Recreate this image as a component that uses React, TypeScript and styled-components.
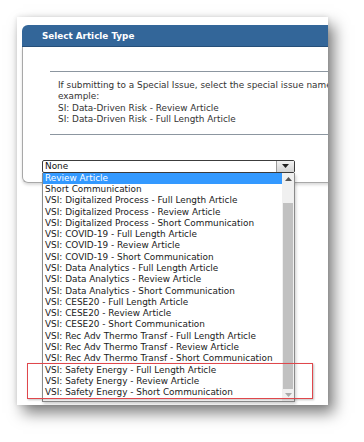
import React from 'react'
import styled, { createGlobalStyle } from 'styled-components'

const GlobalStyle = createGlobalStyle`
  html, body {
    margin: 0;
    padding: 0;
    background: #fff;
  }
  body {
    font-family: 'DejaVu Sans', Verdana, sans-serif;
  }
`

const Page = styled.div`
  width: 364px;
  height: 442px;
  padding: 17px 0 0 17px;
  box-sizing: border-box;
  overflow: hidden;
`

const Card = styled.div`
  position: relative;
  width: 311px;
  height: 388px;
  background: #fff;
  overflow: hidden;
  padding: 8px 0 0 5px;
  box-sizing: border-box;
  box-shadow: 6px 8px 14px rgba(0, 0, 0, 0.5), 0 0 5px rgba(0, 0, 0, 0.12);
`

const Panel = styled.div`
  width: 420px;
`

const Header = styled.div`
  height: 22px;
  background: #336699;
  border-bottom: 1px solid #27507a;
  box-sizing: border-box;
  border-radius: 6px 0 0 0;
  padding-left: 20px;
  display: flex;
  align-items: center;
  color: #fff;
  font-weight: bold;
  font-size: 8.8px;
`

const Body = styled.div`
  height: 136px;
  box-sizing: border-box;
  border-left: 1px solid #a8a8a8;
  border-bottom: 1px solid #a8a8a8;
  border-radius: 0 0 0 6px;
  box-shadow: 0 2px 3px rgba(0, 0, 0, 0.15);
  padding-top: 24px;
`

const Notice = styled.div`
  margin-left: 27px;
  border-top: 1px solid #8c96a0;
  border-bottom: 1px solid #8c96a0;
  padding: 8px 0 8px 8px;
  font-size: 8.9px;
  line-height: 11.4px;
  color: #333;
  white-space: nowrap;
`

const SelectWrap = styled.div`
  position: relative;
  margin: 25px 0 0 19px;
  width: 253px;
`

const SelectBox = styled.div`
  height: 13px;
  box-sizing: border-box;
  border: 1px solid #3c3c3c;
  border-radius: 2px;
  display: flex;
  align-items: center;
  font-size: 8.9px;
  color: #111;
  padding-left: 2px;
  background: #fff;
`

const SelectValue = styled.span`
  flex: 1;
`

const ArrowButton = styled.span`
  width: 17px;
  height: 100%;
  border-left: 1px solid #9a9a9a;
  background: linear-gradient(#f2f2f2, #d4d4d4);
  display: flex;
  align-items: center;
  justify-content: center;
`

const DropList = styled.div`
  position: absolute;
  left: 0;
  top: 13px;
  width: 253px;
  height: 229px;
  box-sizing: border-box;
  border: 1px solid #8a8a8a;
  border-top: none;
  background: #fff;
  display: flex;
  box-shadow: 1px 2px 3px rgba(0, 0, 0, 0.2);
`

const Options = styled.div`
  flex: 1;
  overflow: hidden;
`

const Option = styled.div<{ $active?: boolean }>`
  height: 11.3px;
  line-height: 11.3px;
  padding-left: 2px;
  font-size: 8.9px;
  white-space: nowrap;
  color: ${p => (p.$active ? '#fff' : '#1a1a1a')};
  background: ${p => (p.$active ? '#3399ff' : 'transparent')};
`

const Scrollbar = styled.div`
  width: 12px;
  background: #f0f0f0;
  display: flex;
  flex-direction: column;
`

const ScrollArrow = styled.div`
  height: 12px;
  display: flex;
  align-items: center;
  justify-content: center;
`

const Track = styled.div`
  flex: 1;
  padding: 18px 1px 0 1px;
  display: flex;
`

const Thumb = styled.div`
  flex: 1;
  background: #c1c1c1;
`

const Highlight = styled.div`
  position: absolute;
  left: 10px;
  top: 346px;
  width: 286px;
  height: 36px;
  box-sizing: border-box;
  border: 1.5px solid #e0474c;
  box-shadow: 1px 1px 2px rgba(0, 0, 0, 0.25);
`

const Tri = ({ up, color }: { up?: boolean; color: string }) => (
  <svg width="7" height="4" viewBox="0 0 7 4">
    <polygon points={up ? '0,4 7,4 3.5,0' : '0,0 7,0 3.5,4'} fill={color} />
  </svg>
)

const options = [
  'Review Article',
  'Short Communication',
  'VSI: Digitalized Process - Full Length Article',
  'VSI: Digitalized Process - Review Article',
  'VSI: Digitalized Process - Short Communication',
  'VSI: COVID-19 - Full Length Article',
  'VSI: COVID-19 - Review Article',
  'VSI: COVID-19 - Short Communication',
  'VSI: Data Analytics - Full Length Article',
  'VSI: Data Analytics - Review Article',
  'VSI: Data Analytics - Short Communication',
  'VSI: CESE20 - Full Length Article',
  'VSI: CESE20 - Review Article',
  'VSI: CESE20 - Short Communication',
  'VSI: Rec Adv Thermo Transf - Full Length Article',
  'VSI: Rec Adv Thermo Transf - Review Article',
  'VSI: Rec Adv Thermo Transf - Short Communication',
  'VSI: Safety Energy - Full Length Article',
  'VSI: Safety Energy - Review Article',
  'VSI: Safety Energy - Short Communication',
]

export default function App() {
  return (
    <>
      <GlobalStyle />
      <Page>
        <Card>
          <Panel>
            <Header>Select Article Type</Header>
            <Body>
              <Notice>
                If submitting to a Special Issue, select the special issue name from the list. For
                <br />
                example:
                <br />
                SI: Data-Driven Risk - Review Article
                <br />
                SI: Data-Driven Risk - Full Length Article
              </Notice>
              <SelectWrap>
                <SelectBox>
                  <SelectValue>None</SelectValue>
                  <ArrowButton>
                    <Tri color="#222" />
                  </ArrowButton>
                </SelectBox>
                <DropList>
                  <Options>
                    {options.map((o, i) => (
                      <Option key={o} $active={i === 0}>
                        {o}
                      </Option>
                    ))}
                  </Options>
                  <Scrollbar>
                    <ScrollArrow>
                      <Tri up color="#555" />
                    </ScrollArrow>
                    <Track>
                      <Thumb />
                    </Track>
                    <ScrollArrow>
                      <Tri color="#aaa" />
                    </ScrollArrow>
                  </Scrollbar>
                </DropList>
              </SelectWrap>
            </Body>
          </Panel>
          <Highlight />
        </Card>
      </Page>
    </>
  )
}
